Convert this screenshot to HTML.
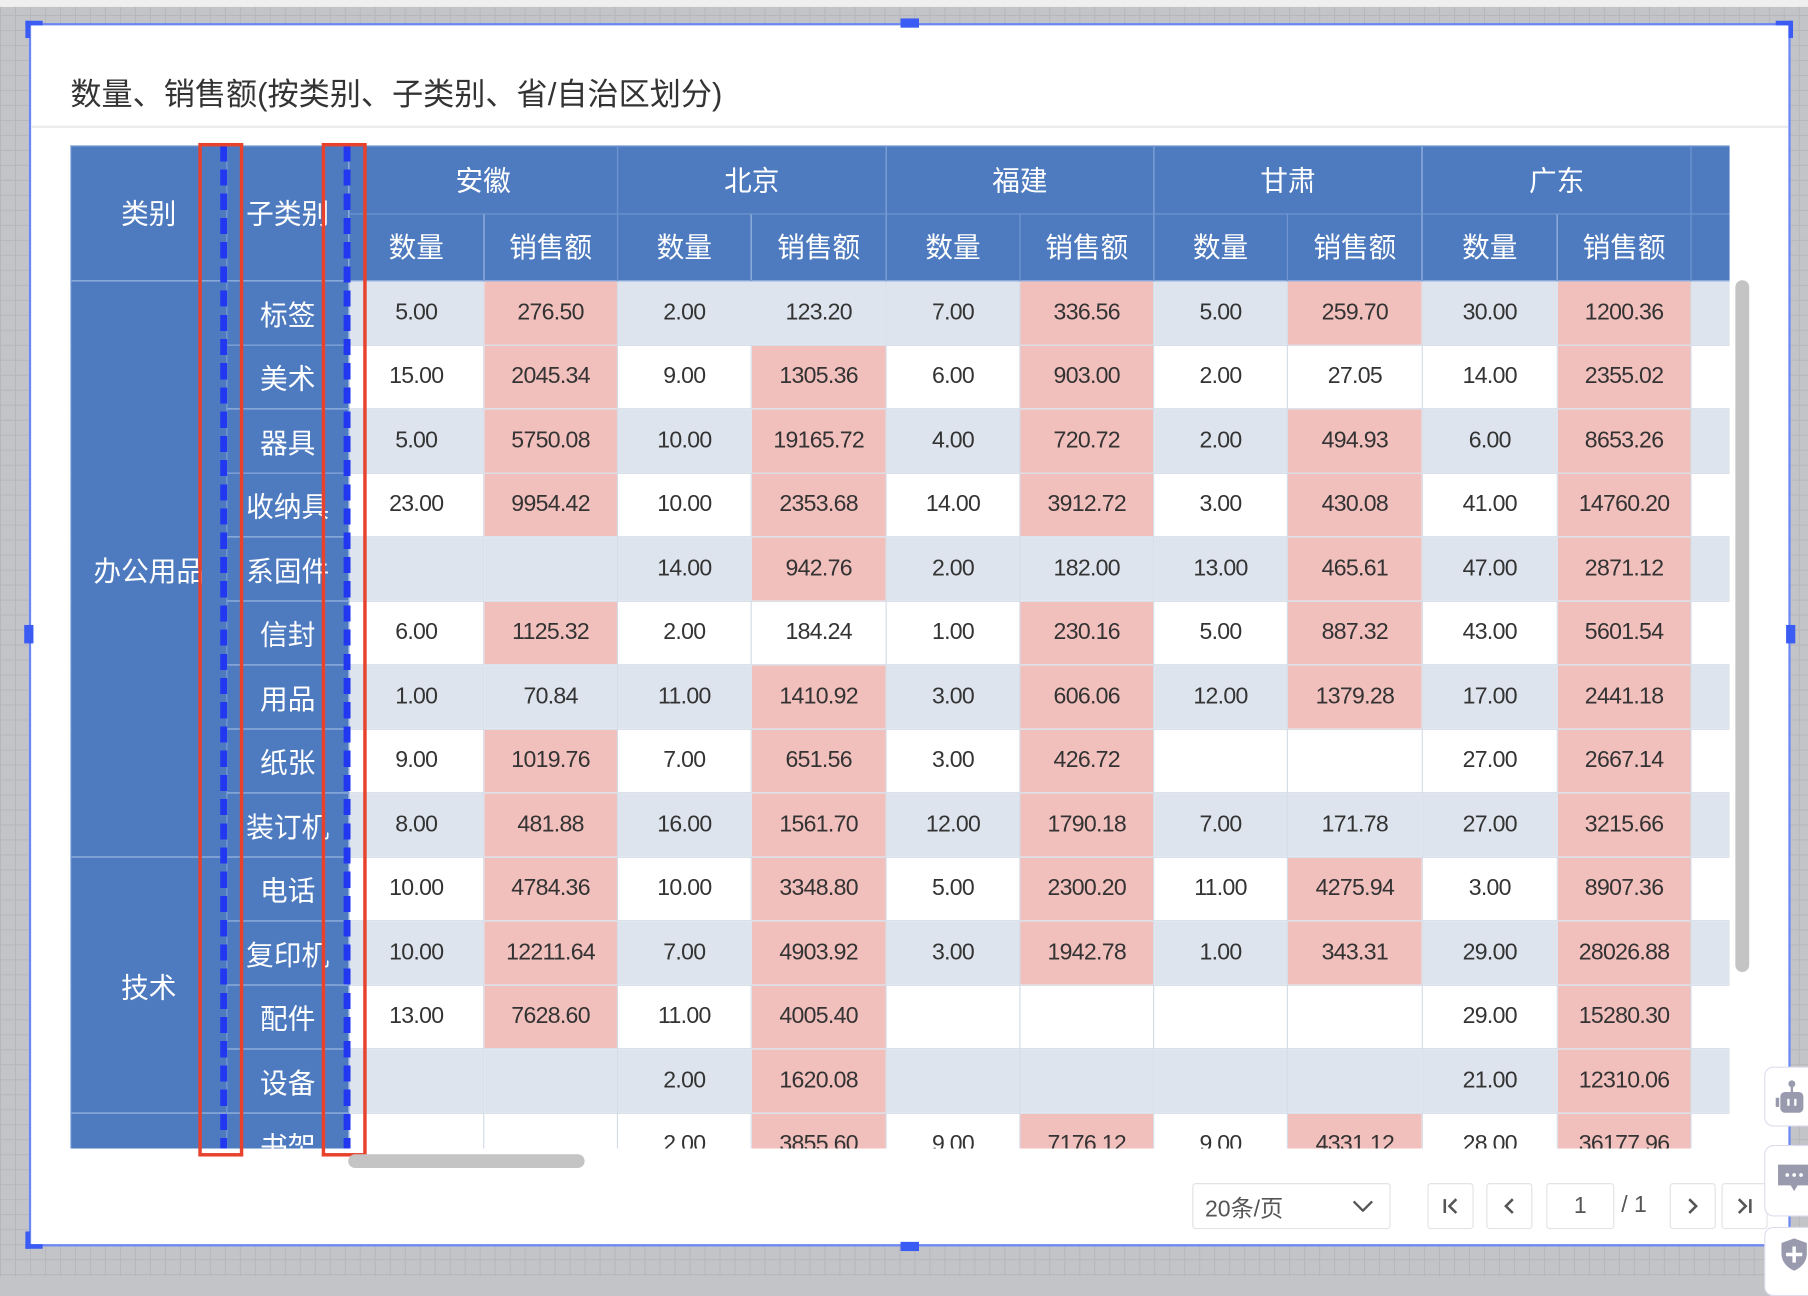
<!DOCTYPE html>
<html><head><meta charset="utf-8"><style>
*{box-sizing:border-box;margin:0;padding:0}
html,body{width:1808px;height:1276px;overflow:hidden}
body{background:#c3c4c8;font-family:"Liberation Sans","Noto Sans CJK SC",sans-serif}
#w{position:absolute;left:0;top:0;width:1568px;height:1107px;transform:scale(1.15306);transform-origin:0 0;
background-color:#c3c4c8;background-image:linear-gradient(#b6b7bb 1px,transparent 1px),linear-gradient(90deg,#b6b7bb 1px,transparent 1px);background-size:13px 13px}
.strip{position:absolute;left:0;top:0;width:1568px;height:6px;background:#efefef}
.panel{position:absolute;left:25px;top:20px;width:1528px;height:1061px;background:#fff;border:2px solid #6a86f2}
.h{position:absolute;background:#3a5cf5}
.title{position:absolute;left:61px;top:60px;font-size:27px;color:#333}
.sep{position:absolute;left:27px;top:109px;width:1524px;height:2px;background:#ececec}
.tw{position:absolute;left:61px;top:126px;width:1439px;height:870px;overflow:hidden;background:#fff}
table{width:1466px;border-collapse:collapse;table-layout:fixed;font-family:"Liberation Sans","Noto Sans CJK SC",sans-serif}
td,th{text-align:center;overflow:hidden;white-space:nowrap;border:1px solid #d4dce7;font-size:20px;letter-spacing:-0.6px;color:#333;font-weight:normal}
th{background:#4e7bbf;color:#fff;border-color:#6b93d0;font-size:24px;letter-spacing:0;padding-bottom:4px}
tr.h1 th{height:59px} tr.h2 th{height:58px}
tbody tr{height:55.5px}
tbody tr.a td{background:#dde4ed}
tbody tr td.p{background:#f1bfbc}
tbody tr td.f{background:#4e7bbf !important;color:#fff;border-color:#6b93d0;font-size:24px;letter-spacing:0}
.red{position:absolute;top:124px;width:39px;height:879px;border:3px solid #e8412c}
.dash{position:absolute;top:126px;width:6px;height:870px;background:repeating-linear-gradient(#2238f0 0 14px,transparent 14px 21px)}
.sb{position:absolute;background:#c4c4c4;border-radius:6px}
.box{position:absolute;border:1px solid #e3e3e3;background:#fff;border-radius:3px;color:#555;font-size:20px;display:flex;align-items:center;justify-content:center}
.side{position:absolute;left:1530px;width:50px;background:#fff;border:1px solid #dde;border-radius:8px}
</style></head><body><div id="w">
<div class="strip"></div>
<div class="panel"></div>
<div class="h" style="left:22px;top:18px;width:15px;height:4px"></div><div class="h" style="left:22px;top:18px;width:4px;height:15px"></div>
<div class="h" style="left:1540px;top:18px;width:15px;height:4px"></div><div class="h" style="left:1551px;top:18px;width:4px;height:15px"></div>
<div class="h" style="left:22px;top:1079px;width:15px;height:4px"></div><div class="h" style="left:22px;top:1068px;width:4px;height:15px"></div>
<div class="h" style="left:781px;top:16px;width:16px;height:8px"></div><div class="h" style="left:781px;top:1077px;width:16px;height:8px"></div>
<div class="h" style="left:21px;top:542px;width:8px;height:16px"></div><div class="h" style="left:1549px;top:542px;width:8px;height:16px"></div>
<div class="title">数量、销售额(按类别、子类别、省/自治区划分)</div>
<div class="sep"></div>
<div class="tw"><table>
<colgroup><col style="width:135px"><col style="width:106px"><col style="width:117px"><col style="width:116px"><col style="width:116px"><col style="width:117px"><col style="width:116px"><col style="width:116px"><col style="width:116px"><col style="width:117px"><col style="width:117px"><col style="width:116px"><col style="width:61px"></colgroup>
<thead>
<tr class="h1"><th rowspan="2">类别</th><th rowspan="2">子类别</th><th colspan="2">安徽</th><th colspan="2">北京</th><th colspan="2">福建</th><th colspan="2">甘肃</th><th colspan="2">广东</th><th></th></tr>
<tr class="h2"><th>数量</th><th>销售额</th><th>数量</th><th>销售额</th><th>数量</th><th>销售额</th><th>数量</th><th>销售额</th><th>数量</th><th>销售额</th><th></th></tr>
</thead><tbody>
<tr class="a"><td class="f" rowspan="9">办公用品</td><td class="f">标签</td><td>5.00</td><td class="p">276.50</td><td>2.00</td><td>123.20</td><td>7.00</td><td class="p">336.56</td><td>5.00</td><td class="p">259.70</td><td>30.00</td><td class="p">1200.36</td><td></td></tr>
<tr><td class="f">美术</td><td>15.00</td><td class="p">2045.34</td><td>9.00</td><td class="p">1305.36</td><td>6.00</td><td class="p">903.00</td><td>2.00</td><td>27.05</td><td>14.00</td><td class="p">2355.02</td><td></td></tr>
<tr class="a"><td class="f">器具</td><td>5.00</td><td class="p">5750.08</td><td>10.00</td><td class="p">19165.72</td><td>4.00</td><td class="p">720.72</td><td>2.00</td><td class="p">494.93</td><td>6.00</td><td class="p">8653.26</td><td></td></tr>
<tr><td class="f">收纳具</td><td>23.00</td><td class="p">9954.42</td><td>10.00</td><td class="p">2353.68</td><td>14.00</td><td class="p">3912.72</td><td>3.00</td><td class="p">430.08</td><td>41.00</td><td class="p">14760.20</td><td></td></tr>
<tr class="a"><td class="f">系固件</td><td></td><td></td><td>14.00</td><td class="p">942.76</td><td>2.00</td><td>182.00</td><td>13.00</td><td class="p">465.61</td><td>47.00</td><td class="p">2871.12</td><td></td></tr>
<tr><td class="f">信封</td><td>6.00</td><td class="p">1125.32</td><td>2.00</td><td>184.24</td><td>1.00</td><td class="p">230.16</td><td>5.00</td><td class="p">887.32</td><td>43.00</td><td class="p">5601.54</td><td></td></tr>
<tr class="a"><td class="f">用品</td><td>1.00</td><td>70.84</td><td>11.00</td><td class="p">1410.92</td><td>3.00</td><td class="p">606.06</td><td>12.00</td><td class="p">1379.28</td><td>17.00</td><td class="p">2441.18</td><td></td></tr>
<tr><td class="f">纸张</td><td>9.00</td><td class="p">1019.76</td><td>7.00</td><td class="p">651.56</td><td>3.00</td><td class="p">426.72</td><td></td><td></td><td>27.00</td><td class="p">2667.14</td><td></td></tr>
<tr class="a"><td class="f">装订机</td><td>8.00</td><td class="p">481.88</td><td>16.00</td><td class="p">1561.70</td><td>12.00</td><td class="p">1790.18</td><td>7.00</td><td>171.78</td><td>27.00</td><td class="p">3215.66</td><td></td></tr>
<tr><td class="f" rowspan="4">技术</td><td class="f">电话</td><td>10.00</td><td class="p">4784.36</td><td>10.00</td><td class="p">3348.80</td><td>5.00</td><td class="p">2300.20</td><td>11.00</td><td class="p">4275.94</td><td>3.00</td><td class="p">8907.36</td><td></td></tr>
<tr class="a"><td class="f">复印机</td><td>10.00</td><td class="p">12211.64</td><td>7.00</td><td class="p">4903.92</td><td>3.00</td><td class="p">1942.78</td><td>1.00</td><td class="p">343.31</td><td>29.00</td><td class="p">28026.88</td><td></td></tr>
<tr><td class="f">配件</td><td>13.00</td><td class="p">7628.60</td><td>11.00</td><td class="p">4005.40</td><td></td><td></td><td></td><td></td><td>29.00</td><td class="p">15280.30</td><td></td></tr>
<tr class="a"><td class="f">设备</td><td></td><td></td><td>2.00</td><td class="p">1620.08</td><td></td><td></td><td></td><td></td><td>21.00</td><td class="p">12310.06</td><td></td></tr>
<tr><td class="f"></td><td class="f">书架</td><td></td><td></td><td>2.00</td><td class="p">3855.60</td><td>9.00</td><td class="p">7176.12</td><td>9.00</td><td class="p">4331.12</td><td>28.00</td><td class="p">36177.96</td><td></td></tr>
</tbody></table></div>
<div class="dash" style="left:191px"></div><div class="dash" style="left:298px"></div>
<div class="red" style="left:172px"></div><div class="red" style="left:279px"></div>
<div class="sb" style="left:302px;top:1001px;width:205px;height:12px"></div>
<div class="sb" style="left:1505px;top:243px;width:12px;height:600px"></div>
<div class="box" style="left:1034px;top:1026px;width:172px;height:40px;justify-content:space-between;padding:0 14px 0 10px">20条/页<svg width="18" height="10" viewBox="0 0 18 10"><path d="M1 1l8 8 8-8" fill="none" stroke="#555" stroke-width="2"/></svg></div>
<div class="box" style="left:1238px;top:1026px;width:40px;height:40px"><svg width="16" height="16" viewBox="0 0 16 16"><path d="M3 2v12M13 2l-6 6 6 6" fill="none" stroke="#555" stroke-width="2.2"/></svg></div>
<div class="box" style="left:1289px;top:1026px;width:40px;height:40px"><svg width="12" height="16" viewBox="0 0 12 16"><path d="M9 2l-6 6 6 6" fill="none" stroke="#555" stroke-width="2.2"/></svg></div>
<div class="box" style="left:1341px;top:1026px;width:59px;height:40px">1</div>
<div style="position:absolute;left:1406px;top:1034px;font-size:20px;color:#555">/ 1</div>
<div class="box" style="left:1448px;top:1026px;width:40px;height:40px"><svg width="12" height="16" viewBox="0 0 12 16"><path d="M3 2l6 6-6 6" fill="none" stroke="#555" stroke-width="2.2"/></svg></div>
<div class="box" style="left:1493px;top:1026px;width:40px;height:40px"><svg width="16" height="16" viewBox="0 0 16 16"><path d="M13 2v12M3 2l6 6-6 6" fill="none" stroke="#555" stroke-width="2.2"/></svg></div>
<div class="side" style="top:925px;height:52px"><svg style="position:absolute;left:8px;top:10px" width="30" height="32" viewBox="0 0 30 32"><circle cx="15" cy="4" r="3" fill="#9a9aae"/><rect x="14" y="6" width="2" height="6" fill="#9a9aae"/><rect x="5" y="11" width="20" height="18" rx="4" fill="#9a9aae"/><rect x="1" y="16" width="3" height="8" fill="#9a9aae"/><rect x="11" y="17" width="2" height="6" fill="#fff"/><rect x="17" y="17" width="2" height="6" fill="#fff"/></svg></div>
<div class="side" style="top:993px;height:62px"><svg style="position:absolute;left:10px;top:15px" width="30" height="26" viewBox="0 0 30 26"><path d="M1 1h28v18H18l-3 5-3-5H1z" fill="#9a9aae"/><circle cx="9" cy="10" r="1.6" fill="#fff"/><circle cx="15" cy="10" r="1.6" fill="#fff"/><circle cx="21" cy="10" r="1.6" fill="#fff"/></svg></div>
<div class="side" style="top:1064px;height:60px"><svg style="position:absolute;left:12px;top:8px" width="26" height="30" viewBox="0 0 26 30"><path d="M13 1l11 4v9c0 8-6 13-11 15C8 27 2 22 2 14V5z" fill="#9a9aae"/><path d="M13 8v14M6 15h14" stroke="#fff" stroke-width="3"/></svg></div>
</div></body></html>
